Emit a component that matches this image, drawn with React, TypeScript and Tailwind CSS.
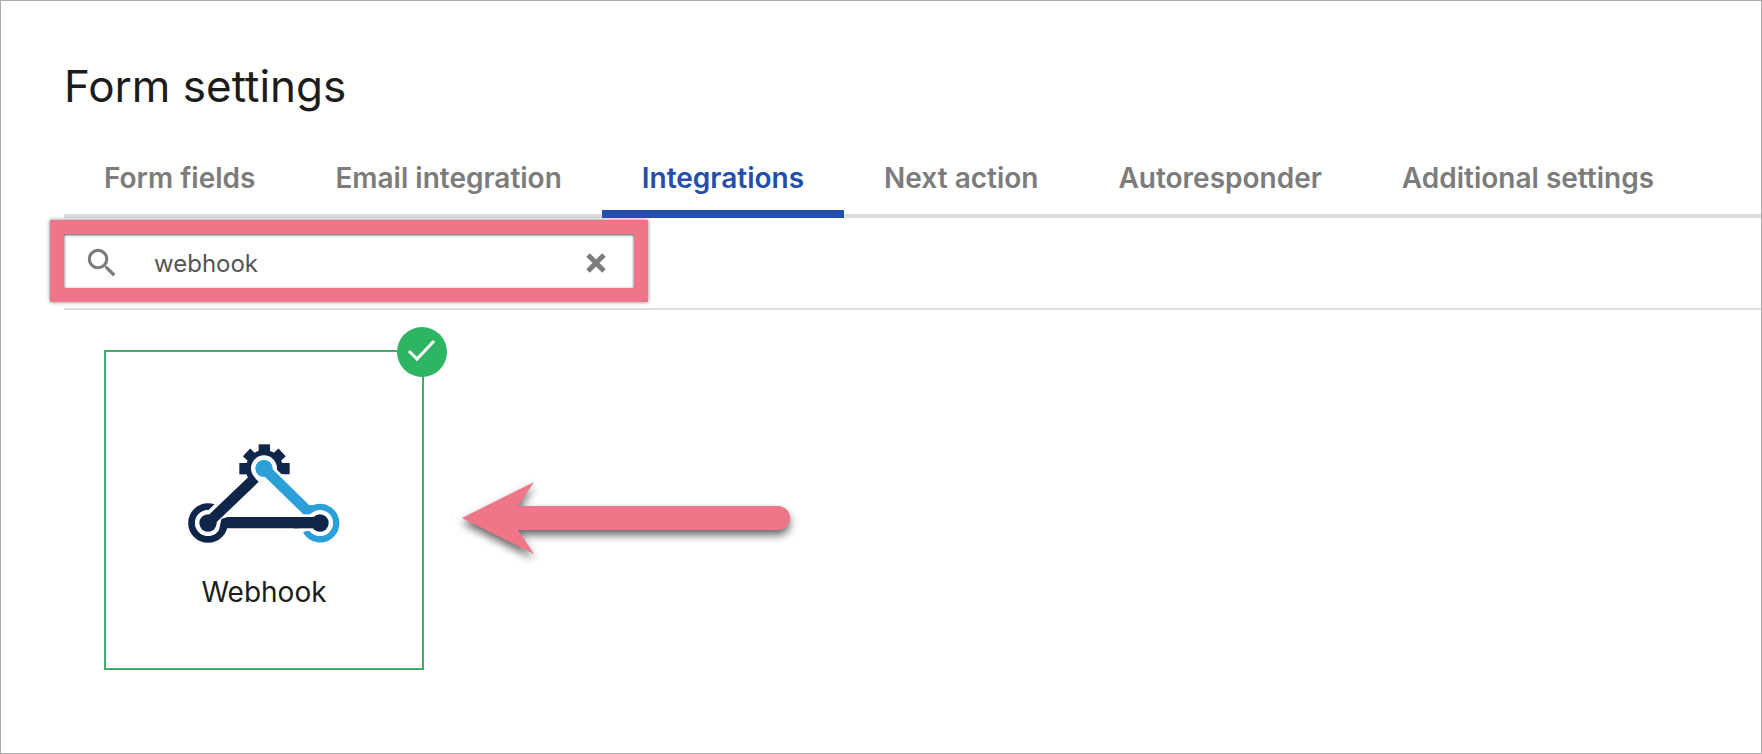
import { useState } from "react";
import { MdSearch } from "react-icons/md";

const tabs = [
  "Form fields",
  "Email integration",
  "Integrations",
  "Next action",
  "Autoresponder",
  "Additional settings",
];

function WebhookLogo() {
  return (
    <svg viewBox="83 72 459 300" className="w-[153px] h-[100px]" aria-hidden="true">
      {/* gear */}
      <g fill="#10254a">
        <rect x="295" y="73" width="34" height="40" />
        <rect x="296" y="74" width="32" height="40" transform="rotate(-47 312 147)" />
        <rect x="296" y="74" width="32" height="40" transform="rotate(47 312 147)" />
        <rect x="237" y="129" width="40" height="34" />
        <path d="M347 129H388V163H368L347 150Z" />
      </g>
      <path d="M280 179A46 46 0 1 1 356 160" fill="none" stroke="#10254a" strokeWidth="20" />
      {/* left ring with its two arms */}
      <circle cx="143" cy="309" r="49" fill="none" stroke="#10254a" strokeWidth="21" />
      <path d="M143 309L228 227" stroke="#fff" strokeWidth="54" />
      <circle cx="143" cy="309" r="39" fill="#fff" />
      <path d="M183 297L202 291H479V325H200L176 332Z" fill="#10254a" />
      <path d="M143 309L284 174" stroke="#10254a" strokeWidth="32" />
      <circle cx="143" cy="309" r="26" fill="#10254a" />
      <circle cx="311" cy="145" r="39" fill="#fff" />
      {/* right ring and the arm going up */}
      <path d="M434 293A48 48 0 1 1 437 333" fill="none" stroke="#2a9fd8" strokeWidth="20" />
      <path d="M311 145L420 252" stroke="#fff" strokeWidth="48" />
      <path d="M311 145L448 279" stroke="#2a9fd8" strokeWidth="32" />
      <path d="M420 270L442 255L466 256V275L436 292Z" fill="#2a9fd8" />
      <circle cx="311" cy="145" r="26" fill="#2a9fd8" />
      <path d="M415 308H479" stroke="#fff" strokeWidth="50" />
      <circle cx="479" cy="309" r="39" fill="#fff" />
      <path d="M400 308H479" stroke="#10254a" strokeWidth="34" />
      <circle cx="479" cy="309" r="26" fill="#10254a" />
    </svg>
  );
}

function Arrow() {
  return (
    <svg
      viewBox="0 0 330 74"
      className="w-[330px] h-[74px] shrink-0 overflow-visible drop-shadow-[0_5px_4px_rgba(0,0,0,0.6)]"
      aria-hidden="true"
    >
      <path d="M0 37L72 1L56 25H316A12 12 0 0 1 316 49H56L72 73Z" fill="#ef7689" />
    </svg>
  );
}

export default function App() {
  const [activeTab, setActiveTab] = useState("Integrations");
  const [query, setQuery] = useState("webhook");
  const [selected, setSelected] = useState(true);

  return (
    <main className="min-h-screen border border-[#ababab] bg-white pt-[57px] pl-[63px] font-[Inter,sans-serif]">
      <h1 className="text-[44px] leading-[56px] text-[#1c1c1c]">Form settings</h1>

      <div role="tablist" className="mt-6 flex shadow-[inset_0_-4px_0_#dedede]">
        {tabs.map((tab) => (
          <button
            key={tab}
            type="button"
            role="tab"
            aria-selected={tab === activeTab}
            onClick={() => setActiveTab(tab)}
            className={`whitespace-nowrap border-b-8 px-10 pt-5 pb-3 text-[28px] leading-10 font-semibold ${
              tab === activeTab
                ? "border-[#234fab] text-[#234fab]"
                : "border-transparent text-[#7c7c7c]"
            }`}
          >
            {tab}
          </button>
        ))}
      </div>

      <div className="border-b-2 border-[#dedede] pt-0.5 pb-1.5">
        <div className="-ml-3.5 w-[598px] border-14 border-[#ef7689] shadow-[0_0_4px_rgba(0,0,0,0.5)]">
          <div className="flex h-[54px] items-center pt-1 pr-6 pl-[19px] shadow-[inset_0_1px_3px_rgba(0,0,0,0.7)]">
            <MdSearch className="size-[38px] shrink-0 text-[#7c7c7c]" />
            <input
              type="text"
              aria-label="Search integrations"
              value={query}
              onChange={(e) => setQuery(e.target.value)}
              className="ml-[33px] h-9 min-w-0 flex-1 bg-transparent text-2xl text-[#555] outline-none"
            />
            <button type="button" aria-label="Clear search" onClick={() => setQuery("")} className="p-1">
              <svg viewBox="0 0 20 20" className="size-5">
                <path d="M2 2L18 18M18 2L2 18" stroke="#7c7c7c" strokeWidth="5" />
              </svg>
            </button>
          </div>
        </div>
      </div>

      <div className="flex items-start gap-[38px] pt-10 pl-10">
        <button
          type="button"
          aria-pressed={selected}
          onClick={() => setSelected(!selected)}
          className="relative flex size-80 shrink-0 flex-col items-center border-2 border-[#3dae6b] pt-[92px]"
        >
          <WebhookLogo />
          <span className="mt-7 text-[28px] leading-10 text-[#1c1c1c]">Webhook</span>
          {selected && (
            <span className="absolute -top-[25px] -right-[25px] flex size-[50px] items-center justify-center rounded-full bg-[#2eb563]">
              <svg viewBox="0 0 30 24" className="h-6 w-[30px]" fill="none">
                <path d="M2 11L10 19L27 1" stroke="#fff" strokeWidth="3" />
              </svg>
            </span>
          )}
        </button>
        <div className="pt-[131px]">
          <Arrow />
        </div>
      </div>
    </main>
  );
}
